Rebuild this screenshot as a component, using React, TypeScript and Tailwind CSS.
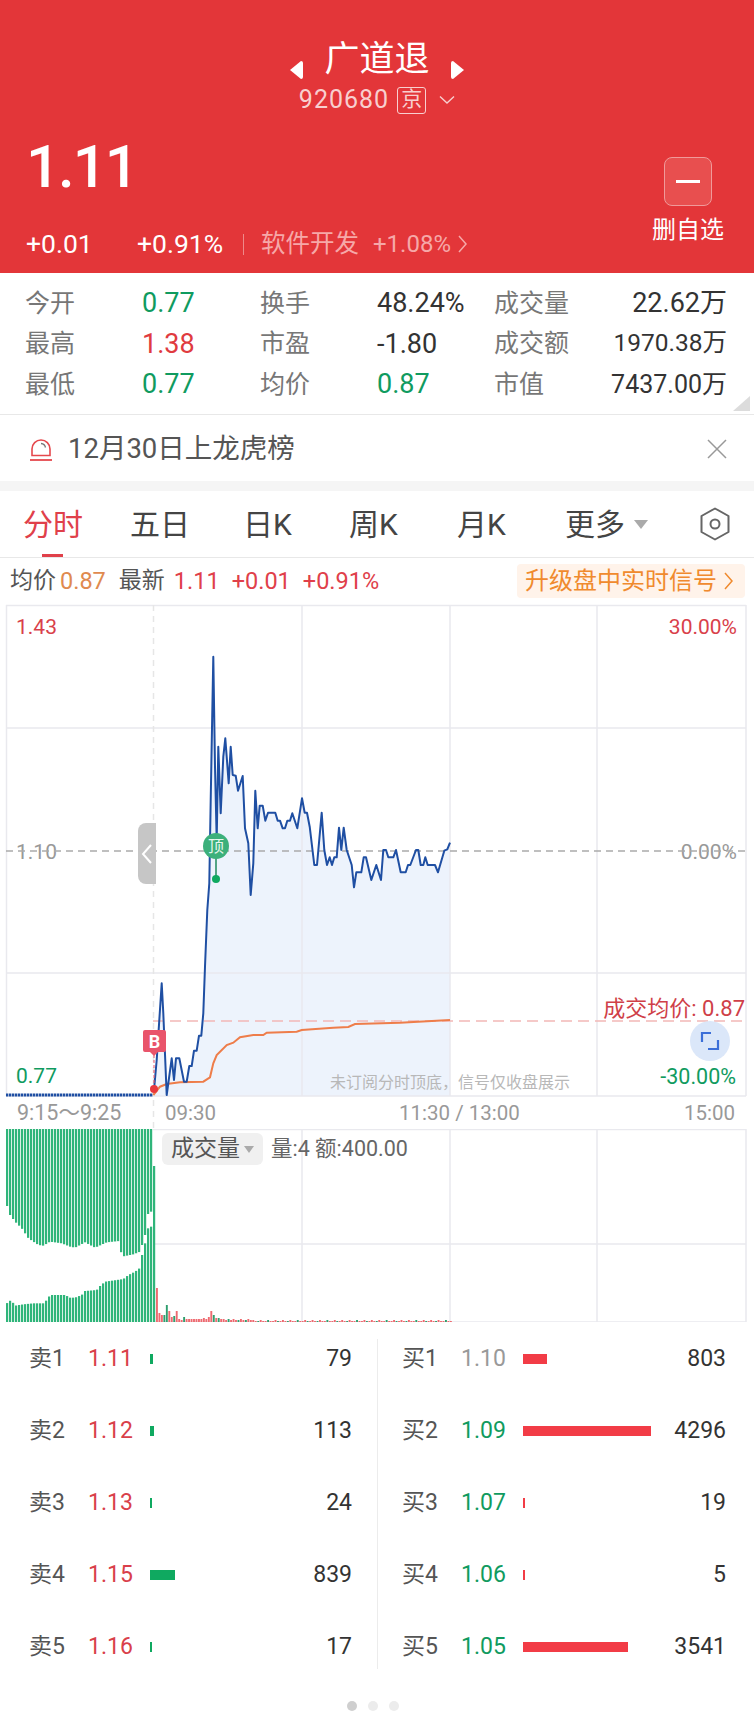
import React from 'react'

// traced from the reference at 3x, so x/3 and y/3 + 600 give page pixels
const pricePts: number[][] = [
  [462, 1470], [470, 1380], [485, 1150], [490, 1240], [500, 1485], [515, 1375], [522, 1440], [528, 1375], [538, 1375],
  [552, 1445], [560, 1445], [568, 1398], [575, 1398], [582, 1352], [590, 1352], [597, 1307], [604, 1307], [610, 1240],
  [615, 1100], [622, 930], [628, 850], [632, 600], [640, 170], [645, 500], [650, 720], [655, 440], [662, 640],
  [670, 470], [676, 415], [686, 550], [692, 440], [698, 525], [707, 527], [714, 572], [728, 528], [735, 685], [745, 730],
  [752, 885], [760, 790], [766, 572], [773, 685], [779, 617], [788, 617], [796, 662], [804, 638], [826, 638], [833, 662],
  [840, 662], [848, 685], [855, 685], [862, 662], [870, 662], [877, 640], [892, 685], [906, 595], [914, 638], [921, 638],
  [929, 680], [943, 795], [951, 795], [965, 638], [973, 750], [981, 795], [989, 772], [996, 795], [1003, 772], [1010, 772],
  [1017, 683], [1024, 750], [1031, 683], [1040, 750], [1055, 795], [1062, 862], [1069, 817], [1084, 817], [1091, 772],
  [1098, 772], [1114, 840], [1129, 795], [1143, 840], [1150, 750], [1158, 750], [1165, 772], [1180, 772], [1188, 750],
  [1202, 817], [1217, 817], [1224, 795], [1231, 795], [1248, 750], [1255, 750], [1262, 795], [1270, 795], [1276, 772],
  [1283, 795], [1305, 795], [1314, 817], [1333, 752], [1342, 748], [1350, 728],
]

const avgPts: number[][] = [
  [460, 585], [480, 560], [500, 552], [540, 547], [610, 545], [630, 532], [640, 490], [650, 465], [680, 435], [700, 428],
  [720, 412], [760, 405], [790, 405], [800, 398], [890, 395], [905, 390], [1000, 383], [1045, 381], [1065, 372], [1200, 368],
  [1350, 360],
]

const toPage = (pts: number[][], offset: number) =>
  pts.map(([x, y]) => `${(x / 3).toFixed(1)},${(offset + y / 3).toFixed(1)}`).join(' ')

const lerp = (keys: number[][], x: number) => {
  if (x <= keys[0][0]) return keys[0][1]
  for (let i = 1; i < keys.length; i++) {
    if (x <= keys[i][0]) {
      const [x0, y0] = keys[i - 1]
      const [x1, y1] = keys[i]
      return y0 + ((y1 - y0) * (x - x0)) / (x1 - x0)
    }
  }
  return keys[keys.length - 1][1]
}

const upperEdge = [[20, 240], [30, 270], [45, 290], [65, 310], [85, 340], [115, 360], [130, 362], [150, 350], [185, 355], [210, 365], [225, 368], [255, 352], [285, 368], [320, 352], [358, 348], [365, 395], [400, 388], [420, 380], [435, 330], [445, 260]]
const lowerEdge = [[20, 535], [33, 525], [45, 542], [70, 538], [100, 535], [130, 535], [140, 525], [150, 510], [195, 510], [210, 518], [225, 518], [245, 510], [255, 498], [290, 495], [300, 483], [315, 470], [350, 465], [370, 462], [385, 450], [405, 440], [418, 430], [428, 380], [435, 355], [445, 305]]

const earlyVolume = [34, 9, 7, 7, 17, 11, 5, 6, 11, 3, 2, 5, 3, 3, 3, 3, 3, 3, 3, 4, 3, 5, 11, 7, 4, 4, 3, 3, 2, 3, 2, 3, 2, 2, 3, 2, 2, 3, 2, 2]
const greenAt = [3, 4, 7, 11, 23, 25, 29, 33, 36]

const stats = [
  ['今开', '0.77', 'text-[#109b5f]', '换手', '48.24%', 'text-[#333]', '成交量', '22.62万', 'text-[27px]'],
  ['最高', '1.38', 'text-[#e03b3f]', '市盈', '-1.80', 'text-[#333]', '成交额', '1970.38万', 'text-[24.5px]'],
  ['最低', '0.77', 'text-[#109b5f]', '均价', '0.87', 'text-[#109b5f]', '市值', '7437.00万', 'text-[25px]'],
]

const sells = [
  ['卖1', '1.11', 3, '79'],
  ['卖2', '1.12', 4, '113'],
  ['卖3', '1.13', 2, '24'],
  ['卖4', '1.15', 25, '839'],
  ['卖5', '1.16', 2, '17'],
] as const

const buys = [
  ['买1', '1.10', 24, '803', 'text-[#999]'],
  ['买2', '1.09', 128, '4296', 'text-[#109b5f]'],
  ['买3', '1.07', 2, '19', 'text-[#109b5f]'],
  ['买4', '1.06', 2, '5', 'text-[#109b5f]'],
  ['买5', '1.05', 105, '3541', 'text-[#109b5f]'],
] as const

const PriceChart = () => (
  <div className="relative h-[491px] w-[754px] shrink-0">
    <span className="absolute left-[16px] top-[10px] text-[21px] leading-6 text-[#d9404a]">1.43</span>
    <span className="absolute right-[17px] top-[10px] text-[21px] leading-6 text-[#d9404a]">30.00%</span>
    <span className="absolute left-[16px] top-[235px] text-[21px] leading-6 text-[#999]">1.10</span>
    <span className="absolute right-[17px] top-[235px] text-[21px] leading-6 text-[#999]">0.00%</span>
    <span className="absolute left-[16px] top-[459px] text-[21px] leading-6 text-[#109b5f]">0.77</span>
    <svg className="absolute left-0 top-0 overflow-visible" width="754" height="491" viewBox="0 605 754 491">
      <polygon points={`154,1096 ${toPage(pricePts, 600)} 450,1096`} fill="#edf3fc" />
      <g stroke="#e9e9ee" strokeWidth="1.5" fill="none">
        <path d="M6 605.5H746M6 728H746M6 973H746M6 1096H746" />
        <path d="M6.5 605V1096M302 605V1096M450 605V1096M597 605V1096M746 605V1096" />
      </g>
      <path d="M153.5 605V1129" stroke="#e6e6e6" strokeWidth="1.5" strokeDasharray="6 5" fill="none" />
      <path d="M6 851H746" stroke="#aaa" strokeWidth="1.5" strokeDasharray="7 5" fill="none" />
      <path d="M153 1021H746" stroke="#f2b8b6" strokeWidth="1.5" strokeDasharray="11 6" fill="none" />
      <path d="M6 1095H153" stroke="#1f4fa3" strokeWidth="3" strokeDasharray="2.4 .6" fill="none" />
      <polyline points={toPage(avgPts, 900)} fill="none" stroke="#ee7d4a" strokeWidth="2" />
      <polyline points={toPage(pricePts, 600)} fill="none" stroke="#1f4fa3" strokeWidth="2" strokeLinejoin="round" />
      <path d="M154 1055V1089" stroke="#e9546b" strokeWidth="1" strokeDasharray="3 2" />
      <circle cx="154" cy="1089" r="4" fill="#e8383d" />
      <path d="M145 1030H164a2 2 0 0 1 2 2V1050a2 2 0 0 1 -2 2H158L154 1056L150 1052H145a2 2 0 0 1 -2 -2V1032a2 2 0 0 1 2 -2Z" fill="#e9546b" />
      <text x="154.5" y="1048" textAnchor="middle" fontSize="18" fontWeight="700" fill="#fff">B</text>
      <path d="M216 846V879" stroke="#1f8a5c" strokeWidth="1.5" />
      <circle cx="216" cy="879" r="4" fill="#0fa960" />
      <circle cx="216" cy="846" r="13" fill="#3cb07b" />
      <text x="216" y="852" textAnchor="middle" fontSize="16" fill="#e8f7ef">顶</text>
      <circle cx="710" cy="1041" r="20" fill="#dbe7f9" />
      <path d="M702 1042V1033H711M718 1040V1049H708" stroke="#3c6fd8" strokeWidth="2.2" fill="none" />
    </svg>
    <span className="absolute right-[18px] top-[460px] text-[21.5px] leading-6 text-[#109b5f]">-30.00%</span>
    <span className="absolute right-[9px] top-[392px] text-[22px] leading-6 text-[#cf4048]">成交均价: 0.87</span>
    <span className="absolute left-[330px] top-[466px] text-[16px] leading-6 text-[#b8b8b8]">未订阅分时顶底，信号仅收盘展示</span>
    {/* side handle that folds the pre-market part */}
    <div className="absolute left-[138px] top-[218px] flex h-[61px] w-[18px] items-center justify-center rounded-l-lg bg-[#c6c6c6]">
      <svg width="12" height="22" viewBox="0 0 12 22" fill="none" stroke="#fff" strokeWidth="2">
        <path d="M10 2L2 11L10 20" />
      </svg>
    </div>
  </div>
)

const VolumeChart = () => {
  const left = Array.from({ length: 49 }, (_, i) => i)
  const right = Array.from({ length: 120 }, (_, i) => i)
  return (
    <div className="relative h-[193px] w-[754px] shrink-0">
      <svg className="absolute left-0 top-0" width="754" height="193" viewBox="0 1129 754 193">
        <g stroke="#e9e9ee" strokeWidth="1.5" fill="none">
          <path d="M153 1129.5H746M153 1244H746M153 1322H746" />
          <path d="M302 1129V1322M450 1129V1322M597 1129V1322M746 1129V1322" />
        </g>
        {left.map((i) => {
          const x = 6 + i * 3
          const zx = x * 3 + 3
          const top = 1125 + lerp(upperEdge, zx) / 3
          const bottom = 1125 + lerp(lowerEdge, zx) / 3
          return (
            <g key={i} fill="#2fb57a">
              <rect x={x} y={1129} width={2.2} height={top - 1129} />
              <rect x={x} y={bottom} width={2.2} height={1322 - bottom} />
            </g>
          )
        })}
        <rect x={153} y={1166} width={2.2} height={156} fill="#2fb57a" />
        {right.map((i) => {
          const h = earlyVolume[i] ?? (i % 3 === 0 ? 2 : 1)
          const green = greenAt.includes(i) || (i >= 40 && i % 4 === 1)
          return <rect key={i} x={156 + i * 2.47} y={1322 - h} width={1.9} height={h} fill={green ? '#2f9e6e' : '#ee6a70'} />
        })}
      </svg>
      <div className="absolute left-[162px] top-[4px] flex items-center gap-3">
        <div className="flex h-[32px] w-[101px] items-center justify-center gap-1 rounded-md bg-[#f0f0f0] text-[23px] text-[#555]">
          成交量
          <span className="h-0 w-0 border-x-[5px] border-t-[7px] border-x-transparent border-t-[#aaa]" />
        </div>
        <span className="-ml-[4px] text-[21.5px] text-[#666]">量:4 额:400.00</span>
      </div>
    </div>
  )
}

const BookRow = ({ label, price, priceClass, barClass, bar, qty }: { label: string; price: string; priceClass: string; barClass: string; bar: number; qty: string }) => (
  <div className="flex h-10 items-center text-[23px]">
    <span className="w-[59px] shrink-0 text-[#555]">{label}</span>
    <span className={`w-[62px] shrink-0 ${priceClass}`}>{price}</span>
    <div className="flex-1">
      <div className={`h-[10px] ${barClass}`} style={{ width: bar }} />
    </div>
    <span className="text-[#333]">{qty}</span>
  </div>
)

export default function App() {
  return (
    <div className="flex h-[1712px] w-[754px] flex-col overflow-hidden bg-white font-['Roboto','Noto_Sans_CJK_SC',sans-serif]">
      {/* header */}
      <header className="relative h-[273px] shrink-0 bg-[#e33639] text-white">
        <div className="flex h-[86px] items-end justify-center gap-[21px] pb-[1px]">
          <svg width="13" height="18" viewBox="0 0 13 18" className="mb-[6px]" fill="#fff"><path d="M0 9L11 0Q13 0 13 2V16Q13 18 11 18Z" /></svg>
          <span className="text-[35px] leading-[50px]">广道退</span>
          <svg width="13" height="18" viewBox="0 0 13 18" className="mb-[6px]" fill="#fff"><path d="M13 9L2 0Q0 0 0 2V16Q0 18 2 18Z" /></svg>
        </div>
        <div className="flex h-[28px] items-center justify-center gap-[8px] text-[#f8cfcf]">
          <span className="text-[25px] tracking-[1px]">920680</span>
          <span className="flex h-[27px] w-[29px] items-center justify-center rounded-[3px] border border-[#f8cfcf] text-[21px]">京</span>
          <svg width="16" height="10" viewBox="0 0 16 10" fill="none" stroke="#f8cfcf" strokeWidth="1.4" className="ml-[5px]"><path d="M1 1.5L8 8L15 1.5" /></svg>
        </div>
        <div className="flex items-start justify-between pl-[26px] pr-[30px]">
          <div className="pt-[15px]">
            <div className="text-[60px] font-medium leading-[76px] tracking-[-2px]">1.11</div>
            <div className="mt-[24px] flex h-[30px] items-center">
              <span className="w-[111px] text-[26.5px]">+0.01</span>
              <span className="w-[106px] text-[26.5px]">+0.91%</span>
              <span className="mr-[17px] h-[21px] w-px bg-[#ee8a8a]" />
              <span className="mr-[14px] text-[24.5px] text-[#f6a8a8]">软件开发</span>
              <span className="mr-[7px] text-[24px] text-[#f6a8a8]">+1.08%</span>
              <svg width="9" height="18" viewBox="0 0 9 18" fill="none" stroke="#f6a8a8" strokeWidth="1.5"><path d="M1 1L8 9L1 17" /></svg>
            </div>
          </div>
          <div className="flex flex-col items-center pt-[43px]">
            <div className="flex h-[49px] w-[48px] items-center justify-center rounded-lg border border-[#f09a9a] bg-[#e84f4f]">
              <span className="h-[3px] w-[24px] bg-white" />
            </div>
            <span className="mt-[8px] text-[24px] leading-8">删自选</span>
          </div>
        </div>
      </header>

      {/* stats */}
      <section className="relative h-[142px] shrink-0 border-b border-[#e8e8e8] pl-[25px] pr-[27px] pt-[10px]">
        {stats.map((row) => (
          <div key={row[0]} className="grid h-[40.5px] grid-cols-[117px_118px_117px_117px_80px_1fr] items-center text-[25px]">
            <span className="text-[#777]">{row[0]}</span>
            <span className={`text-[27px] ${row[2]}`}>{row[1]}</span>
            <span className="text-[#777]">{row[3]}</span>
            <span className={`text-[27px] ${row[5]}`}>{row[4]}</span>
            <span className="text-[#777]">{row[6]}</span>
            <span className={`text-right text-[#333] ${row[8]}`}>{row[7]}</span>
          </div>
        ))}
        <div className="absolute bottom-[3px] right-[4px] h-0 w-0 border-b-[15px] border-l-[17px] border-b-[#dcdcdc] border-l-transparent" />
      </section>

      {/* notice */}
      <section className="flex h-[66px] shrink-0 items-center justify-between pl-[29px] pr-[27px] pt-[1px]">
        <div className="flex items-center gap-[15px]">
          <svg width="24" height="24" viewBox="0 0 24 24" fill="none" stroke="#e5484d" strokeWidth="1.6">
            <path d="M3 18.5V12a9 9 0 0 1 18 0v6.5Z" />
            <path d="M1 23H23" strokeWidth="1.8" />
            <path d="M12 6.5a5 5 0 0 1 4.5 4" stroke="#777" strokeWidth="1.3" />
          </svg>
          <span className="text-[27.5px] text-[#555]">12月30日上龙虎榜</span>
        </div>
        <svg width="20" height="20" viewBox="0 0 20 20" fill="none" stroke="#999" strokeWidth="1.5"><path d="M1 1L19 19M19 1L1 19" /></svg>
      </section>
      <div className="h-[10px] shrink-0 bg-[#f5f5f5]" />

      {/* tabs */}
      <nav className="flex h-[67px] shrink-0 items-center border-b border-[#e8e8e8] pl-[23px] text-[30px] text-[#444]">
        <span className="relative flex h-full w-[107px] items-center text-[#e0404a]">
          分时
          <span className="absolute bottom-0 left-[19px] h-[3px] w-[21px] bg-[#e0404a]" />
        </span>
        <span className="w-[113px]">五日</span>
        <span className="w-[106px]">日K</span>
        <span className="w-[108px]">周K</span>
        <span className="w-[108px]">月K</span>
        <span className="flex w-[136px] items-center gap-[9px]">
          更多
          <span className="h-0 w-0 border-x-[7px] border-t-[9px] border-x-transparent border-t-[#aaa]" />
        </span>
        <svg width="30" height="34" viewBox="0 0 30 34" fill="none" stroke="#666" strokeWidth="2" className="-ml-[1px]">
          <path d="M15 1.5L28.5 9V25L15 32.5L1.5 25V9Z" strokeLinejoin="round" />
          <circle cx="15" cy="17" r="4.5" />
        </svg>
      </nav>

      {/* latest row */}
      <section className="flex h-[47px] shrink-0 items-center justify-between pl-[10px] pr-[9px] text-[23.5px]">
        <div className="flex items-center">
          <span className="text-[23px] text-[#555]">均价</span>
          <span className="ml-[4px] text-[#e08a4f]">0.87</span>
          <span className="ml-[13px] text-[23px] text-[#555]">最新</span>
          <span className="ml-[9px] text-[#e0404a]">1.11</span>
          <span className="ml-[12px] text-[#e0404a]">+0.01</span>
          <span className="ml-[12px] text-[#e0404a]">+0.91%</span>
        </div>
        <div className="-mt-[2px] flex h-[34px] w-[228px] items-center gap-[7px] rounded bg-[#fff3ea] pl-[8px] text-[24px] text-[#f08a2e]">
          升级盘中实时信号
          <svg width="9" height="18" viewBox="0 0 9 18" fill="none" stroke="#f08a2e" strokeWidth="1.5"><path d="M1 1L8 9L1 17" /></svg>
        </div>
      </section>

      <PriceChart />

      {/* time axis */}
      <div className="relative flex h-[33px] shrink-0 items-center pt-[1px] text-[20.5px] text-[#999]">
        <span className="ml-[17px] w-[148px] text-[21.5px]">9:15～9:25</span>
        <span className="w-[234px]">09:30</span>
        <span className="w-[285px]">11:30 / 13:00</span>
        <span>15:00</span>
      </div>

      <VolumeChart />

      {/* order book */}
      <section className="mt-[17px] grid h-[330px] shrink-0 grid-cols-[378px_1fr]">
        <div className="flex flex-col gap-8 border-r border-[#ececec] pl-[29px] pr-[25px]">
          {sells.map(([label, price, bar, qty]) => (
            <BookRow key={label} label={label} price={price} priceClass="text-[#d9404a]" barClass="bg-[#0fa960]" bar={bar} qty={qty} />
          ))}
        </div>
        <div className="flex flex-col gap-8 pl-[24px] pr-[28px]">
          {buys.map(([label, price, bar, qty, priceClass]) => (
            <BookRow key={label} label={label} price={price} priceClass={priceClass} barClass="bg-[#f23c46]" bar={bar} qty={qty} />
          ))}
        </div>
      </section>

      {/* pager */}
      <div className="mt-[32px] flex justify-center gap-[11px] pr-[8px]">
        <span className="h-[10px] w-[10px] rounded-full bg-[#cfcfcf]" />
        <span className="h-[10px] w-[10px] rounded-full bg-[#ececec]" />
        <span className="h-[10px] w-[10px] rounded-full bg-[#ececec]" />
      </div>
    </div>
  )
}
